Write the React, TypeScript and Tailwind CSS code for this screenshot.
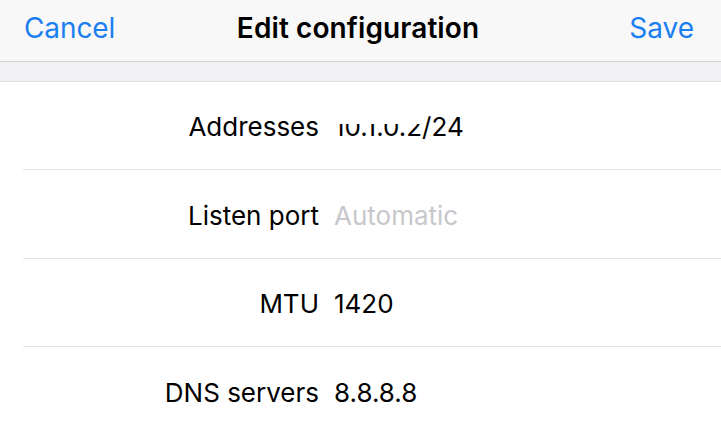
const rows = [
  { label: 'Addresses', value: '10.1.0.2/24', height: 'h-[88px]' },
  { label: 'Listen port', value: 'Automatic', height: 'h-[89px]', placeholder: true },
  { label: 'MTU', value: '1420', height: 'h-[88px]' },
  { label: 'DNS servers', value: '8.8.8.8', height: 'h-[88px]' },
]

export default function App() {
  return (
    <div className="flex flex-col w-[721px] h-[435px] overflow-hidden bg-white font-['Inter',sans-serif] text-[26px] text-black">
      <header className="grid grid-cols-[1fr_auto_1fr] items-start h-[64px] pt-[7px] pl-[24px] pr-[27px] bg-[#f8f8f8] border-b border-[#d4d4d4]">
        <button className="justify-self-start text-[28px] text-[#1a7ff0] tracking-[-0.1px]">Cancel</button>
        <h1 className="font-semibold text-[28px] tracking-[0.1px] mr-[2px]">Edit configuration</h1>
        <button className="justify-self-end text-[28px] text-[#1a7ff0]">Save</button>
      </header>
      <div className="h-[21px] bg-[#f1f1f5] border-b border-[#dedede]" />
      <div className="flex flex-col pl-[23px]">
        {rows.map((row, i) => (
          <div
            key={row.label}
            className={`flex items-center ${row.height} pt-[2px] ${i < rows.length - 1 ? 'border-b border-[#e4e4e4]' : ''}`}
          >
            <span className="w-[296px] text-right">{row.label}</span>
            {i === 0 ? (
              <span className="ml-[15px]">
                <span className="[clip-path:inset(42%_0_0_0)]">10.1.0.2</span>/24
              </span>
            ) : (
              <span className={`ml-[15px] ${row.placeholder ? 'text-[#c7c7cc]' : ''}`}>{row.value}</span>
            )}
          </div>
        ))}
      </div>
    </div>
  )
}
